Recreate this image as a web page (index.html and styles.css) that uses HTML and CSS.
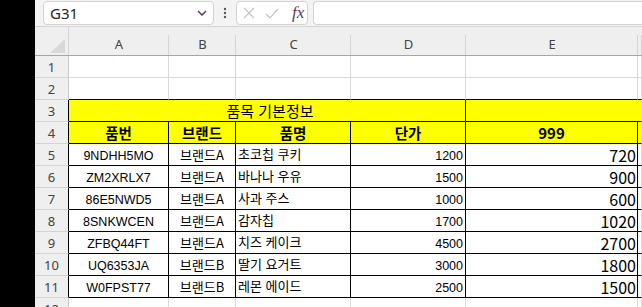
FILE: index.html
```html
<!DOCTYPE html>
<html lang="ko">
<head>
    <meta charset="UTF-8">
    <meta name="viewport" content="width=device-width, initial-scale=1.0">
    <title>품목 기본정보</title>
    <link rel="stylesheet" href="styles.css">
</head>
<body>
<div class="app">
    <div class="edge"></div>
    <div class="main">
        <div class="fbar">
            <div class="namebox">
                <span class="cellref">G31</span>
                <svg class="chevron" width="10" height="6" viewBox="0 0 10 6"><polyline points="1,1 5,5 9,1" fill="none" stroke="#5a3a5a" stroke-width="1.5"/></svg>
            </div>
            <div class="more">
                <svg width="4" height="12" viewBox="0 0 4 12"><circle cx="2" cy="2" r="1.2" fill="#555"/><circle cx="2" cy="6" r="1.2" fill="#555"/><circle cx="2" cy="10" r="1.2" fill="#555"/></svg>
            </div>
            <div class="fxbox">
                <svg width="12" height="12" viewBox="0 0 12 12"><path d="M1 1 L11 11 M11 1 L1 11" stroke="#c4c4c4" stroke-width="1.2"/></svg>
                <svg width="14" height="11" viewBox="0 0 14 11"><polyline points="1,6 5,10 13,1" fill="none" stroke="#c4c4c4" stroke-width="1.2"/></svg>
                <span class="fx">fx</span>
            </div>
            <div class="input"></div>
        </div>

        <div class="sheet">
            <div class="row colhead">
                <div class="corner"><span class="tri"></span></div>
                <div class="ch">A</div>
                <div class="ch">B</div>
                <div class="ch">C</div>
                <div class="ch">D</div>
                <div class="ch">E</div>
                <div class="ch"></div>
            </div>

            <div class="row">
                <div class="rh">1</div>
                <div class="c"></div><div class="c"></div><div class="c"></div><div class="c"></div><div class="c"></div><div class="c"></div>
            </div>
            <div class="row">
                <div class="rh">2</div>
                <div class="c kb"></div><div class="c kb"></div><div class="c kb"></div><div class="c kb"></div><div class="c kb"></div><div class="c kb"></div>
            </div>
            <div class="row">
                <div class="rh kr">3</div>
                <div class="c k y span4 title">품목 기본정보</div>
                <div class="c kb y span2"></div>
            </div>
            <div class="row">
                <div class="rh kr">4</div>
                <div class="c k y head">품번</div>
                <div class="c k y head">브랜드</div>
                <div class="c k y head">품명</div>
                <div class="c k y head">단가</div>
                <div class="c k y head num">999</div>
                <div class="c kb y"></div>
            </div>

            <div class="row">
                <div class="rh kr">5</div>
                <div class="c k id">9NDHH5MO</div><div class="c k brand">브랜드A</div><div class="c k name">초코칩 쿠키</div>
                <div class="c k price">1200</div><div class="c k val">720</div><div class="c kb"></div>
            </div>
            <div class="row">
                <div class="rh kr">6</div>
                <div class="c k id">ZM2XRLX7</div><div class="c k brand">브랜드A</div><div class="c k name">바나나 우유</div>
                <div class="c k price">1500</div><div class="c k val">900</div><div class="c kb"></div>
            </div>
            <div class="row">
                <div class="rh kr">7</div>
                <div class="c k id">86E5NWD5</div><div class="c k brand">브랜드A</div><div class="c k name">사과 주스</div>
                <div class="c k price">1000</div><div class="c k val">600</div><div class="c kb"></div>
            </div>
            <div class="row">
                <div class="rh kr">8</div>
                <div class="c k id">8SNKWCEN</div><div class="c k brand">브랜드A</div><div class="c k name">감자칩</div>
                <div class="c k price">1700</div><div class="c k val">1020</div><div class="c kb"></div>
            </div>
            <div class="row">
                <div class="rh kr">9</div>
                <div class="c k id">ZFBQ44FT</div><div class="c k brand">브랜드A</div><div class="c k name">치즈 케이크</div>
                <div class="c k price">4500</div><div class="c k val">2700</div><div class="c kb"></div>
            </div>
            <div class="row">
                <div class="rh kr">10</div>
                <div class="c k id">UQ6353JA</div><div class="c k brand">브랜드B</div><div class="c k name">딸기 요거트</div>
                <div class="c k price">3000</div><div class="c k val">1800</div><div class="c kb"></div>
            </div>
            <div class="row">
                <div class="rh kr">11</div>
                <div class="c k id">W0FPST77</div><div class="c k brand">브랜드B</div><div class="c k name">레몬 에이드</div>
                <div class="c k price">2500</div><div class="c k val">1500</div><div class="c kb"></div>
            </div>
            <div class="row">
                <div class="rh">12</div>
                <div class="c"></div><div class="c"></div><div class="c"></div><div class="c"></div><div class="c"></div><div class="c"></div>
            </div>
        </div>
    </div>
</div>
</body>
</html>
```

FILE: styles.css
```css
* {
    box-sizing: border-box;
}
body {
    margin: 0;
    font-family: "Noto Sans CJK KR", "Noto Sans", sans-serif;
    background-color: #fff;
    overflow: hidden;
}
.app {
    display: flex;
    height: 307px;
}
.edge {
    width: 35px;
    flex: none;
    background-color: #000;
}
.main {
    flex: 1;
    min-width: 0;
    overflow: hidden;
}

/* formula bar */
.fbar {
    display: flex;
    height: 26px;
    padding: 1px 0 1px 8px;
    background-color: #f3f3f3;
}
.namebox {
    width: 171px;
    display: flex;
    align-items: center;
    justify-content: space-between;
    padding: 0 6px 0 6px;
    background-color: #fff;
    border: 1px solid #d3d3d3;
    border-radius: 4px;
}
.cellref {
    font-family: "Noto Sans", sans-serif;
    font-size: 15px;
    color: #222;
}
.more {
    width: 22px;
    display: flex;
    align-items: center;
    justify-content: center;
}
.fxbox {
    width: 72px;
    display: flex;
    align-items: center;
    gap: 10px;
    padding-left: 6px;
    background-color: #fff;
    border: 1px solid #d3d3d3;
    border-radius: 4px;
}
.fx {
    font-family: "Liberation Serif", serif;
    font-style: italic;
    font-size: 17px;
    color: #5a3a5a;
    margin-left: 3px;
}
.input {
    flex: 1;
    margin-left: 5px;
    background-color: #fff;
    border: 1px solid #d3d3d3;
    border-right: none;
    border-radius: 4px 0 0 4px;
}

/* grid */
.row {
    display: grid;
    grid-template-columns: 34px 100px 67px 115px 115px 172px 1fr;
    height: 22px;
}
.colhead {
    height: 30px;
    background-color: #efefef;
    border-top: 1px solid #d4d4d4;
    border-bottom: 1px solid #a6a6a6;
}
.corner {
    display: flex;
    align-items: flex-end;
    justify-content: flex-end;
    padding: 0 3px 2px 0;
    border-right: 1px solid #d4d4d4;
}
.tri {
    width: 0;
    height: 0;
    border-left: 15px solid transparent;
    border-bottom: 14px solid #d8d8d8;
}
.ch {
    display: flex;
    align-items: center;
    justify-content: center;
    padding-top: 5px;
    font-family: "Noto Sans", sans-serif;
    font-size: 13px;
    color: #444;
    background: linear-gradient(#d4d4d4, #d4d4d4) right bottom / 1px 20px no-repeat;
}
.rh {
    display: flex;
    align-items: center;
    justify-content: center;
    padding-top: 1px;
    font-family: "Noto Sans", sans-serif;
    font-size: 13px;
    color: #444;
    background-color: #efefef;
    border-right: 1px solid #c8c8c8;
    border-bottom: 1px solid #d4d4d4;
}
.c {
    display: flex;
    align-items: center;
    overflow: hidden;
    white-space: nowrap;
    border-right: 1px solid #dadada;
    border-bottom: 1px solid #dadada;
    color: #000;
}
.k {
    border-right-color: #000;
    border-bottom-color: #000;
}
.kb {
    border-bottom-color: #000;
}
.kr {
    border-right-color: #000;
}
.y {
    background-color: #ff0;
}
.span4 {
    grid-column: span 4;
}
.span2 {
    grid-column: span 2;
}

.title {
    justify-content: center;
    font-size: 15px;
    padding-left: 6px;
}
.head {
    justify-content: center;
    font-size: 14.5px;
    font-weight: bold;
}
.head.num {
    font-size: 15px;
}
.id {
    justify-content: center;
    padding-top: 3px;
    font-family: "Liberation Sans", sans-serif;
    font-size: 12.5px;
}
.brand {
    justify-content: center;
    font-size: 13px;
}
.name {
    padding-left: 2px;
    align-items: flex-start;
    font-size: 13px;
}
.price {
    justify-content: flex-end;
    padding: 3px 2px 0 0;
    font-family: "Liberation Sans", sans-serif;
    font-size: 12.5px;
}
.val {
    justify-content: flex-end;
    padding-right: 1px;
    font-size: 16px;
}
```
